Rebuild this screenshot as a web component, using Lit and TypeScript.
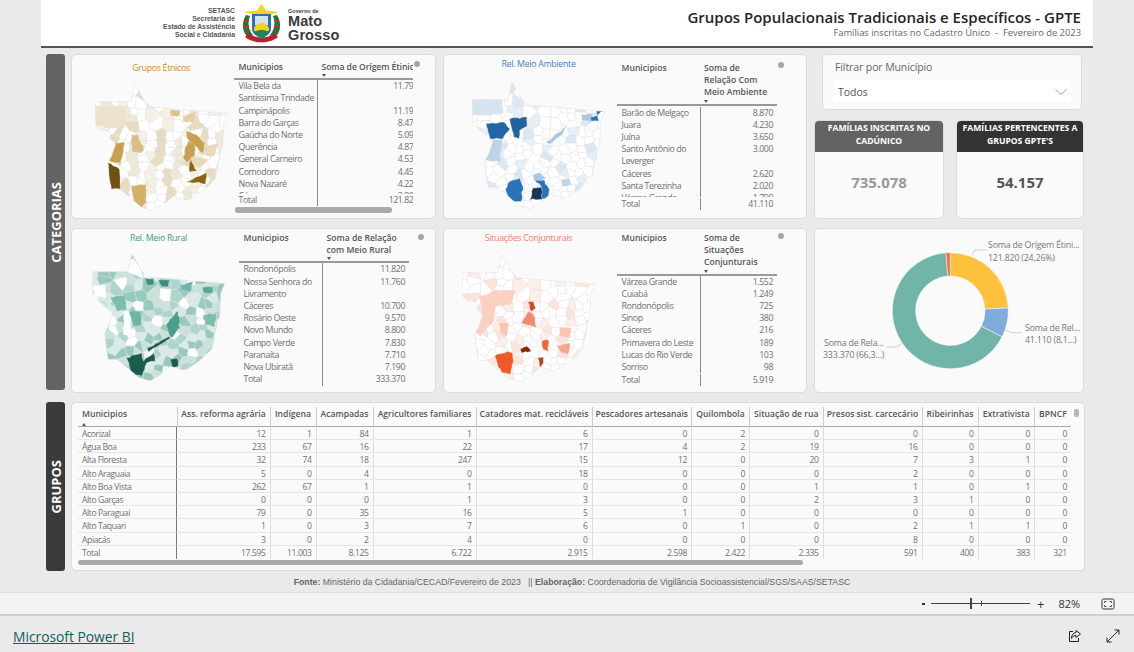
import { LitElement, css, html, svg } from 'lit'
import { customElement } from 'lit/decorators.js'

// map of the state: outline and municipal mesh are in a 400x385 box
const OUTLINE = [
  [0, 53], [107, 53], [115, 20], [120, 0], [135, 25], [145, 45], [165, 68], [245, 75], [400, 88], [388, 118],
  [385, 190], [378, 200], [372, 240], [362, 285], [340, 308], [320, 325], [290, 345], [275, 350], [235, 338],
  [205, 365], [175, 382], [140, 372], [105, 342], [75, 317], [48, 317], [42, 280], [38, 237], [50, 215],
  [62, 180], [30, 150], [0, 122],
]

let seed = 12345
const rand = () => {
  seed = (seed * 1103515245 + 12345) % 2147483648
  return seed / 2147483648
}

function buildSeeds() {
  const seeds: number[][] = []
  for (let y = 8; y < 385; y += 24) {
    for (let x = 6; x < 400; x += 27) {
      // north of the state has bigger municipalities
      if (y < 130 && rand() < 0.35) continue
      seeds.push([x + rand() * 20 - 10, y + rand() * 18 - 9])
    }
  }
  return seeds
}

function clipCell(poly: number[][], a: number[], b: number[]) {
  const mx = (a[0] + b[0]) / 2
  const my = (a[1] + b[1]) / 2
  const nx = b[0] - a[0]
  const ny = b[1] - a[1]
  const side = (p: number[]) => (p[0] - mx) * nx + (p[1] - my) * ny
  const out: number[][] = []
  poly.forEach((p, i) => {
    const q = poly[(i + 1) % poly.length]
    const sp = side(p)
    const sq = side(q)
    if (sp <= 0) out.push(p)
    if (sp < 0 !== sq < 0) {
      const t = sp / (sp - sq)
      out.push([p[0] + (q[0] - p[0]) * t, p[1] + (q[1] - p[1]) * t])
    }
  })
  return out
}

const CELLS = buildSeeds().map((s, i, all) => {
  let poly = [[-5, -5], [405, -5], [405, 390], [-5, 390]]
  all.forEach((o, j) => {
    if (j !== i) poly = clipCell(poly, s, o)
  })
  return poly.map((p) => p[0].toFixed(1) + ',' + p[1].toFixed(1)).join(' ')
})

// hand traced shapes get a wobbly edge so they read as municipal borders
function roughen(pts: number[]) {
  const out: number[] = []
  for (let i = 0; i < pts.length; i += 2) {
    const x = pts[i]
    const y = pts[i + 1]
    const nx = pts[(i + 2) % pts.length]
    const ny = pts[(i + 3) % pts.length]
    out.push(x, y)
    const len = Math.hypot(nx - x, ny - y)
    const steps = Math.floor(len / 9)
    for (let s = 1; s < steps; s++) {
      const t = s / steps
      out.push(x + (nx - x) * t + rand() * 5 - 2.5, y + (ny - y) * t + rand() * 5 - 2.5)
    }
  }
  return out.map((v) => v.toFixed(1)).join(' ')
}

interface Blob {
  color: string
  pts: number[]
}

interface MapDef {
  id: string
  ox: number
  oy: number
  rate: number
  tints: string[]
  blobs: Blob[]
}

const MAPS: Record<string, MapDef> = {
  etnicos: {
    id: 'm1', ox: 165, oy: 253, rate: 45, tints: ['#f1e9d8', '#e8dcc0', '#f6f1e6'],
    blobs: [
      { color: '#ece2cb', pts: [165, 318, 255, 320, 258, 380, 210, 385, 165, 375] },
      { color: '#e3cfa3', pts: [430, 350, 470, 335, 460, 368, 430, 365] },
      { color: '#dcc38b', pts: [392, 330, 422, 332, 420, 348, 392, 347] },
      { color: '#e8dab8', pts: [400, 480, 430, 488, 465, 470, 505, 480, 480, 505, 440, 500] },
      { color: '#e8dab8', pts: [495, 440, 535, 432, 525, 470, 500, 470] },
      { color: '#c9a050', pts: [200, 480, 225, 430, 255, 428, 240, 490, 225, 490] },
      { color: '#c9a050', pts: [430, 475, 445, 425, 465, 425, 465, 470, 440, 488] },
      { color: '#c9a050', pts: [440, 395, 470, 405, 495, 430, 490, 462, 465, 438, 445, 420] },
      { color: '#d3b06a', pts: [275, 560, 320, 555, 318, 610, 300, 630, 280, 610] },
      { color: '#d9bf85', pts: [275, 405, 295, 405, 312, 450, 305, 460, 275, 455] },
      { color: '#6f5210', pts: [203, 490, 238, 510, 240, 570, 213, 570, 205, 530] },
      { color: '#8a6510', pts: [455, 480, 472, 515, 450, 518, 450, 490] },
      { color: '#8a6510', pts: [460, 540, 500, 520, 498, 555, 470, 550, 440, 548] },
    ],
  },
  ambiente: {
    id: 'm2', ox: 97, oy: 245, rate: 20, tints: ['#e6eef6', '#dbe7f3'],
    blobs: [
      { color: '#d6e3f1', pts: [97, 295, 185, 295, 190, 340, 130, 345, 97, 345] },
      { color: '#bcd4ea', pts: [127, 465, 155, 420, 190, 418, 180, 485, 140, 480] },
      { color: '#a8c8e4', pts: [425, 342, 460, 342, 455, 365, 428, 360] },
      { color: '#a8c8e4', pts: [320, 425, 385, 375, 365, 405, 330, 432] },
      { color: '#a8c8e4', pts: [280, 525, 300, 518, 320, 535, 305, 545, 285, 540] },
      { color: '#bcd4ea', pts: [365, 540, 390, 535, 395, 555, 370, 560] },
      { color: '#2066a8', pts: [138, 370, 190, 365, 210, 385, 190, 415, 150, 415] },
      { color: '#20639e', pts: [210, 355, 262, 350, 262, 378, 240, 390, 238, 415, 222, 410, 215, 380] },
      { color: '#2a73b8', pts: [210, 545, 240, 535, 250, 560, 245, 605, 215, 605, 197, 570] },
      { color: '#2a73b8', pts: [285, 540, 315, 540, 330, 570, 330, 595, 308, 598, 305, 560] },
      { color: '#2a73b8', pts: [455, 350, 475, 345, 490, 332, 472, 332, 480, 362, 456, 362] },
      { color: '#14375c', pts: [270, 600, 280, 565, 305, 562, 308, 598] },
    ],
  },
  rural: {
    id: 'm3', ox: 155, oy: 97, rate: 88, tints: ['#c9e2dc', '#aed5cc', '#d8ebe7', '#98c9be'],
    blobs: [
      { color: '#ffffff', pts: [155, 190, 195, 190, 195, 228, 165, 225] },
      { color: '#ffffff', pts: [265, 100, 295, 130, 310, 170, 285, 160, 262, 152] },
      { color: '#ffffff', pts: [250, 270, 270, 268, 275, 340, 248, 340] },
      { color: '#7dbcae', pts: [210, 225, 255, 222, 260, 265, 230, 270] },
      { color: '#6fb5a8', pts: [265, 270, 300, 270, 305, 310, 280, 315] },
      { color: '#6fb5a8', pts: [420, 190, 460, 180, 450, 212, 425, 205] },
      { color: '#4a9e8e', pts: [378, 310, 415, 268, 420, 320, 395, 350] },
      { color: '#3f8f80', pts: [315, 170, 340, 170, 340, 190, 320, 190] },
      { color: '#3f8f80', pts: [355, 175, 390, 175, 385, 195, 365, 195] },
      { color: '#5aa798', pts: [488, 197, 520, 197, 515, 215, 490, 212] },
      { color: '#7dbcae', pts: [490, 280, 530, 275, 525, 315, 495, 310] },
      { color: '#1c5c4f', pts: [320, 380, 390, 345, 388, 353, 325, 392] },
      { color: '#1c5c4f', pts: [258, 410, 305, 395, 310, 420, 340, 395, 345, 420, 320, 425, 305, 465, 270, 460, 265, 425] },
      { color: '#1c5c4f', pts: [390, 415, 412, 412, 415, 435, 395, 440] },
    ],
  },
  conjunturais: {
    id: 'm4', ox: 70, oy: 100, rate: 30, tints: ['#fdeee8', '#fde3da'],
    blobs: [
      { color: '#fbd0c0', pts: [120, 225, 175, 205, 230, 205, 215, 250, 170, 255, 165, 300, 125, 345, 100, 320, 130, 270] },
      { color: '#fbc4b0', pts: [180, 305, 210, 305, 205, 345, 185, 335] },
      { color: '#fbc4b0', pts: [365, 320, 400, 320, 395, 350, 365, 345] },
      { color: '#f7a78e', pts: [355, 375, 395, 365, 390, 400, 370, 395] },
      { color: '#f28c70', pts: [250, 305, 270, 270, 285, 280, 295, 320, 265, 310] },
      { color: '#d8481c', pts: [268, 240, 285, 240, 292, 260, 278, 270] },
      { color: '#f05a28', pts: [168, 405, 205, 390, 222, 395, 225, 420, 215, 460, 190, 455, 175, 425] },
      { color: '#f0683a', pts: [310, 360, 330, 355, 330, 390, 315, 385] },
      { color: '#7f2704', pts: [245, 385, 265, 375, 278, 390, 250, 395] },
      { color: '#b8401a', pts: [298, 410, 315, 408, 315, 425, 305, 440] },
    ],
  },
}

function stateMap(def: MapDef) {
  const outline = OUTLINE.map((p) => p.join(',')).join(' ')
  return svg`<svg class="map" viewBox="-1 -1 402 387">
    <defs><clipPath id=${def.id}><polygon points=${outline}></polygon></clipPath></defs>
    <g clip-path=${`url(#${def.id})`}>
      <polygon points=${outline} fill="#ffffff"></polygon>
      ${CELLS.map((pts, i) => {
        const h = (i * 7919 + def.id.charCodeAt(1) * 131) % 101
        const fill = h < def.rate ? def.tints[h % def.tints.length] : '#ffffff'
        return svg`<polygon points=${pts} fill=${fill} stroke="#dedede" stroke-width="1.3"></polygon>`
      })}
      <g transform=${`translate(${-def.ox} ${-def.oy})`}>
        ${def.blobs.map((b) => svg`<polygon points=${roughen(b.pts)} fill=${b.color} stroke="#e6e6e6" stroke-width="1"></polygon>`)}
      </g>
    </g>
    <polygon points=${outline} fill="none" stroke="#dddddd" stroke-width="1.4"></polygon>
  </svg>`
}

type Row = [string, string]

const CARD_ETNICOS: Row[] = [
  ['Vila Bela da Santíssima Trindade', '11.795'], ['Campinápolis', '11.190'], ['Barra do Garças', '8.473'],
  ['Gaúcha do Norte', '5.090'], ['Querência', '4.873'], ['General Carneiro', '4.533'], ['Comodoro', '4.453'],
  ['Nova Nazaré', '4.223'], ['Cáceres', '3.900'],
]
const CARD_AMBIENTE: Row[] = [
  ['Barão de Melgaço', '8.870'], ['Juara', '4.230'], ['Juína', '3.650'], ['Santo Antônio do Leverger', '3.000'],
  ['Cáceres', '2.620'], ['Santa Terezinha', '2.020'], ['Várzea Grande', '1.790'],
]
const CARD_RURAL: Row[] = [
  ['Rondonópolis', '11.820'], ['Nossa Senhora do Livramento', '11.760'], ['Cáceres', '10.700'],
  ['Rosário Oeste', '9.570'], ['Novo Mundo', '8.800'], ['Campo Verde', '7.830'], ['Paranaíta', '7.710'],
  ['Nova Ubiratã', '7.190'],
]
const CARD_CONJ: Row[] = [
  ['Várzea Grande', '1.552'], ['Cuiabá', '1.249'], ['Rondonópolis', '725'], ['Sinop', '380'], ['Cáceres', '216'],
  ['Primavera do Leste', '189'], ['Lucas do Rio Verde', '103'], ['Sorriso', '98'],
]

const GRID_HEAD = [
  'Municipios', 'Ass. reforma agrária', 'Indígena', 'Acampadas', 'Agricultores familiares', 'Catadores mat. recicláveis',
  'Pescadores artesanais', 'Quilombola', 'Situação de rua', 'Presos sist. carcecário', 'Ribeirinhas', 'Extrativista', 'BPNCF',
]
const GRID_ROWS = [
  ['Acorizal', '12', '1', '84', '1', '6', '0', '2', '0', '0', '0', '0', '0'],
  ['Água Boa', '233', '67', '16', '22', '17', '4', '2', '19', '16', '0', '0', '0'],
  ['Alta Floresta', '32', '74', '18', '247', '15', '12', '0', '20', '7', '3', '1', '0'],
  ['Alto Araguaia', '5', '0', '4', '0', '18', '0', '0', '0', '2', '0', '0', '0'],
  ['Alto Boa Vista', '262', '67', '1', '1', '0', '0', '0', '1', '1', '0', '1', '0'],
  ['Alto Garças', '0', '0', '0', '1', '3', '0', '0', '2', '3', '1', '0', '0'],
  ['Alto Paraguai', '79', '0', '35', '16', '5', '1', '0', '0', '0', '0', '0', '0'],
  ['Alto Taquari', '1', '0', '3', '7', '6', '0', '1', '0', '2', '1', '1', '0'],
  ['Apiacás', '3', '0', '2', '4', '0', '0', '0', '0', '8', '0', '0', '0'],
]
const GRID_TOTAL = ['Total', '17.595', '11.003', '8.125', '6.722', '2.915', '2.598', '2.422', '2.335', '591', '400', '383', '321']

const DONUT = [
  { share: 24.26, color: '#fdc13e' },
  { share: 8.19, color: '#7fadd9' },
  { share: 66.37, color: '#70b5a8' },
  { share: 1.18, color: '#ef6f55' },
]

function donutSlices(cx: number, cy: number, ro: number, ri: number) {
  let start = 0
  return DONUT.map((d) => {
    const end = start + (d.share / 100) * Math.PI * 2
    const p = (r: number, a: number) => `${(cx + r * Math.sin(a)).toFixed(2)} ${(cy - r * Math.cos(a)).toFixed(2)}`
    const big = end - start > Math.PI ? 1 : 0
    const path = `M${p(ro, start)}A${ro} ${ro} 0 ${big} 1 ${p(ro, end)}L${p(ri, end)}A${ri} ${ri} 0 ${big} 0 ${p(ri, start)}Z`
    start = end
    return svg`<path d=${path} fill=${d.color} stroke="#fafafa" stroke-width="0.5"></path>`
  })
}

@customElement('app-root')
export class AppRoot extends LitElement {
  private _miniTable(cls: string, title: string, rows: Row[], total: string) {
    return html`
      <div class="mini ${cls}">
        <div class="inner">
          <div class="head">
            <div class="h-cell">Municipios</div>
            <div class="h-cell">${title}<span class="sort"></span></div>
          </div>
          <div class="body">
            ${rows.map((r) => html`<div class="row"><div class="name">${r[0]}</div><div class="val">${r[1]}</div></div>`)}
          </div>
          <div class="row total"><div class="name">Total</div><div class="val">${total}</div></div>
        </div>
      </div>
    `
  }

  private _mapCard(cls: string, title: string, map: MapDef, table: unknown) {
    return html`
      <section class="card map-card ${cls}">
        <div class="map-col">
          <div class="map-title">${title}</div>
          ${stateMap(map)}
        </div>
        ${table}
        <span class="dot"></span>
      </section>
    `
  }

  private _coatOfArms() {
    return svg`<svg class="arms" viewBox="0 0 41 40">
      <path d="M5 12C0 20 1 30 8 35L12 32C8 28 6 20 9 13Z" fill="#1c7a3a"></path>
      <path d="M36 12C41 20 40 30 33 35L29 32C33 28 35 20 32 13Z" fill="#1c7a3a"></path>
      <path d="M3 18L8 17M2 24L8 23M4 30L9 27M38 18L33 17M39 24L33 23M37 30L32 27" stroke="#c9302c" stroke-width="1.4"></path>
      <path d="M4 34C12 41 29 41 37 34L33 30C27 36 14 36 8 30Z" fill="#b9222a"></path>
      <path d="M3 9L16 7.500L20.500 1L25 7.500L38 9L28 12H13Z" fill="#f4d21f"></path>
      <path d="M11 11H30V26C30 31 25 33 20.500 36C16 33 11 31 11 26Z" fill="#2f6fb5"></path>
      <path d="M14 13H27V22H14Z" fill="#cfe8f4"></path>
      <path d="M13 25C16 18 25 18 28 25V27C25 31 16 31 13 27Z" fill="#f4d21f"></path>
      <path d="M14 29C18 26 23 26 27 29C25 32 22 34 20.500 35C19 34 16 32 14 29Z" fill="#1c8a45"></path>
    </svg>`
  }

  render() {
    return html`
      <header class="top">
        <div class="logo">
          <div class="org">SETASC<br />Secretaria de<br />Estado de Assistência<br />Social e Cidadania</div>
          ${this._coatOfArms()}
          <div class="gov"><small>Governo de</small><b>Mato</b><b>Grosso</b></div>
        </div>
        <div class="heading">
          <h1>Grupos Populacionais Tradicionais e Específicos - GPTE</h1>
          <p>Famílias inscritas no Cadastro Único &nbsp;-&nbsp; Fevereiro de 2023</p>
        </div>
      </header>

      <main class="content">
        <div class="band">
          <div class="side"><span>CATEGORIAS</span></div>
          <div class="cats">
            ${this._mapCard('c1', 'Grupos Étnicos', MAPS.etnicos, this._miniTable('t1', 'Soma de Orígem Étinica', CARD_ETNICOS, '121.820'))}
            ${this._mapCard('c2', 'Rel. Meio Ambiente', MAPS.ambiente, this._miniTable('t2', 'Soma de Relação Com Meio Ambiente', CARD_AMBIENTE, '41.110'))}
            <div class="right-top">
              <section class="card filter">
                <div class="filter-label">Filtrar por Município</div>
                <div class="select">
                  <span>Todos</span>
                  <svg class="chev" viewBox="0 0 12 6"><path d="M.5 .5L6 5.500L11.500 .5" fill="none" stroke="#8a8a8a" stroke-width="0.8"></path></svg>
                </div>
              </section>
              <div class="kpis">
                <section class="card kpi k1">
                  <div class="kpi-head">FAMÍLIAS INSCRITAS NO CADÚNICO</div>
                  <div class="kpi-val">735.078</div>
                </section>
                <section class="card kpi k2">
                  <div class="kpi-head">FAMÍLIAS PERTENCENTES A GRUPOS GPTE'S</div>
                  <div class="kpi-val">54.157</div>
                </section>
              </div>
            </div>
            ${this._mapCard('c3', 'Rel. Meio Rural', MAPS.rural, this._miniTable('t3', 'Soma de Relação com Meio Rural', CARD_RURAL, '333.370'))}
            ${this._mapCard('c4', 'Situações Conjunturais', MAPS.conjunturais, this._miniTable('t4', 'Soma de Situações Conjunturais', CARD_CONJ, '5.919'))}
            <section class="card donut">
              <svg viewBox="0 0 270 164" width="270" height="164">
                ${donutSlices(136.3, 82.7, 58, 34.7)}
                <path d="M157.700 27.300L161 22H172.700M191 102.300L197.700 104.700H207.700M72.700 119H82.700L87.700 115.700" fill="none" stroke="#c4c4c4" stroke-width="0.8"></path>
                <text x="174" y="20">Soma de Orígem Étini...</text>
                <text x="174" y="33">121.820 (24,26%)</text>
                <text x="211" y="102.500">Soma de Rel...</text>
                <text x="211" y="115">41.110 (8,1...)</text>
                <text x="10" y="117.500">Soma de Rela...</text>
                <text x="9" y="129.500">333.370 (66,3...)</text>
              </svg>
            </section>
          </div>
        </div>

        <div class="band groups">
          <div class="side dark"><span>GRUPOS</span></div>
          <section class="card sheet">
            <div class="grid">
              ${GRID_HEAD.map((h, i) => html`<div class="gh ${i === 0 ? 'first' : ''}">${h}${i === 0 ? html`<span class="sort up"></span>` : ''}</div>`)}
              ${GRID_ROWS.map((r) => r.map((c, i) => html`<div class="gc ${i === 0 ? 'first' : ''}">${c}</div>`))}
              ${GRID_TOTAL.map((c, i) => html`<div class="gc tot ${i === 0 ? 'first' : ''}">${c}</div>`)}
            </div>
            <div class="hbar"><span></span></div>
            <span class="vbar"></span>
          </section>
        </div>

        <footer class="source">
          <b>Fonte:</b> Ministério da Cidadania/CECAD/Fevereiro de 2023 &nbsp; || <b>Elaboração:</b> Coordenadoria de Vigilância Socioassistencial/SGS/SAAS/SETASC
        </footer>
      </main>

      <div class="zoombar">
        <span class="minus"></span>
        <div class="slider"><span class="thumb"></span><span class="tick"></span></div>
        <span class="plus">+</span>
        <span class="pct">82%</span>
        <svg class="fit" viewBox="0 0 14 12"><rect x="1" y="1" width="12" height="10" rx="1.500" fill="none" stroke="#333" stroke-width="1"></rect><path d="M3.500 5V3.500H5.500M8.500 3.500H10.500V5M10.500 7V8.500H8.500M5.500 8.500H3.500V7" fill="none" stroke="#333" stroke-width="0.8"></path></svg>
      </div>
      <div class="bottombar">
        <a class="brand" href="#">Microsoft Power BI</a>
        <div class="actions">
          <svg viewBox="0 0 14 14"><path d="M8 1.500L12.500 5L8 8.500V6.500C5.500 6.500 4.500 7.500 3.500 9.500C3.500 6 5 3.800 8 3.500Z" fill="none" stroke="#222" stroke-width="1"></path><path d="M5 2.500H1.500V12.500H10.500V9" fill="none" stroke="#222" stroke-width="1"></path></svg>
          <svg viewBox="0 0 14 14"><path d="M8.500 1H13V5.500M13 1L1 13M1 8.500V13H5.500" fill="none" stroke="#222" stroke-width="1"></path></svg>
        </div>
      </div>
    `
  }

  static styles = css`
    :host {
      display: flex;
      flex-direction: column;
      width: 1134px;
      height: 652px;
      background: #eaeaea;
      font-family: "Open Sans", "Noto Sans", sans-serif;
      color: #666;
      overflow: hidden;
    }

    .top {
      box-sizing: border-box;
      width: 1052px;
      height: 48px;
      margin-left: 41px;
      background: #fff;
      border-bottom: 2px solid #555;
      display: flex;
      justify-content: space-between;
      padding: 0 12px 0 121px;
    }
    .logo {
      display: flex;
      align-items: center;
      gap: 6px;
    }
    .org {
      width: 73px;
      font-size: 6.8px;
      line-height: 8.100px;
      font-weight: 700;
      text-align: right;
      color: #555;
      font-family: "Liberation Sans", sans-serif;
      white-space: nowrap;
    }
    .arms {
      width: 41px;
      height: 40px;
    }
    .gov {
      display: flex;
      flex-direction: column;
      font-family: "Liberation Sans", sans-serif;
      color: #3c3c3c;
      padding-top: 4px;
    }
    .gov small {
      font-size: 5.500px;
      font-weight: 700;
      line-height: 6px;
    }
    .gov b {
      font-size: 14.500px;
      line-height: 14px;
      letter-spacing: 0.1px;
    }
    .heading {
      text-align: right;
      padding-top: 7px;
    }
    .heading h1 {
      margin: 0;
      font-size: 15px;
      line-height: 20px;
      font-weight: 600;
      color: #252423;
      white-space: nowrap;
    }
    .heading p {
      margin: 0;
      font-size: 9.350px;
      line-height: 12px;
      color: #666;
      white-space: nowrap;
    }

    .content {
      flex: 1;
      display: flex;
      flex-direction: column;
      padding: 6px 0 0 46px;
    }
    .band {
      display: flex;
      align-items: flex-start;
      gap: 6px;
    }
    .band.groups {
      margin-top: 9px;
    }
    .side {
      width: 19px;
      height: 336px;
      background: #636363;
      border-radius: 3px;
      display: flex;
      align-items: center;
      justify-content: center;
      flex: none;
    }
    .side.dark {
      height: 169px;
      background: #3b3b3b;
    }
    .side span {
      writing-mode: vertical-rl;
      transform: rotate(180deg);
      color: #fff;
      font-size: 13px;
      font-weight: 700;
      white-space: nowrap;
    }

    .cats {
      display: grid;
      grid-template-columns: 365px 364px 270px;
      grid-template-rows: 165px 165px;
      column-gap: 7px;
      row-gap: 9px;
    }
    .card {
      box-sizing: border-box;
      background: #fafafa;
      border: 1px solid #dcdcdc;
      border-radius: 5px;
      position: relative;
    }

    .map-card {
      display: flex;
    }
    .map-col {
      flex: none;
      box-sizing: border-box;
      display: flex;
      flex-direction: column;
      align-items: center;
    }
    .map-title {
      font-size: 8.800px;
      line-height: 13px;
      letter-spacing: -0.3px;
      white-space: nowrap;
    }
    .map {
      width: 133px;
      height: 128px;
      flex: none;
    }
    .c1 .map-col { width: 162px; padding: 7px 0 0 16px; }
    .c1 .map-title { color: #c58b2e; }
    .c1 .map { margin-top: 9px; }
    .c2 .map-col { width: 173px; padding: 3px 0 0 16px; }
    .c2 .map-title { color: #4a7fbc; }
    .c2 .map { margin-top: 11px; }
    .c3 .map-col { width: 167px; padding: 3px 0 0 6px; }
    .c3 .map-title { color: #3f9a8c; }
    .c3 .map { margin-top: 9px; }
    .c4 .map-col { width: 173px; padding: 3px 4px 0 0; }
    .c4 .map-title { color: #f0806a; }
    .c4 .map { margin-top: 10px; }

    .dot {
      position: absolute;
      width: 6px;
      height: 6px;
      border-radius: 50%;
      background: #a6a6a6;
    }
    .c1 .dot { left: 342px; top: 6px; }
    .c2 .dot { left: 334px; top: 7px; }
    .c3 .dot { left: 346px; top: 5px; }
    .c4 .dot { left: 334px; top: 4px; }

    .mini {
      flex: none;
      overflow: hidden;
      font-size: 8.800px;
      line-height: 12.200px;
    }
    .head,
    .row {
      display: grid;
    }
    .head {
      border-bottom: 2px solid #999;
      padding-bottom: 5px;
      font-size: 8.600px;
    }
    .h-cell {
      padding-left: 4.500px;
      font-weight: 600;
      color: #555;
      position: relative;
    }
    .sort {
      position: absolute;
      left: 4.500px;
      bottom: -4px;
      border: 2.500px solid transparent;
      border-top: 3px solid #555;
      border-bottom: 0;
    }
    .body {
      overflow: hidden;
    }
    .name {
      padding-left: 4.500px;
      letter-spacing: -0.4px;
      color: #707070;
    }
    .val {
      text-align: right;
      padding-right: 4px;
      border-left: 1px solid #888;
      letter-spacing: -0.45px;
      color: #707070;
    }
    .total .val {
      height: 12.200px;
    }

    .t1 { width: 179px; margin-top: 6px; }
    .t1 .inner { width: 188px; }
    .t1 .head, .t1 .row { grid-template-columns: 83px 105px; }
    .t1 .h-cell { white-space: nowrap; letter-spacing: -0.06px; }
    .t1 .body { height: 114px; }

    .t2 { width: 160px; margin-top: 7px; }
    .t2 .head, .t2 .row { grid-template-columns: 82.500px 77.500px; }
    .t2 .h-cell + .h-cell { padding-right: 8px; }
    .t2 .body { height: 90.500px; padding-top: 1px; }
    .t2 .total { margin-top: 1px; }

    .t3 { width: 170px; margin-top: 3px; }
    .t3 .head, .t3 .row { grid-template-columns: 83px 87px; }
    .t3 .h-cell + .h-cell { padding-right: 8px; }
    .t3 .body { height: 110px; }

    .t4 { width: 160px; margin-top: 3px; }
    .t4 .head, .t4 .row { grid-template-columns: 82.500px 77.500px; }
    .t4 .h-cell + .h-cell { padding-right: 12px; }
    .t4 .body { height: 98px; }

    .c1::after {
      content: "";
      position: absolute;
      left: 163px;
      top: 152px;
      width: 157px;
      height: 6px;
      border-radius: 3px;
      background: #a9a9a9;
    }

    .right-top {
      display: flex;
      flex-direction: column;
      gap: 10px;
    }
    .filter {
      height: 56px;
      margin: 0 2px 0 8px;
      padding: 5px 10px;
    }
    .filter-label {
      font-size: 10.500px;
      line-height: 15px;
      letter-spacing: -0.1px;
      padding-left: 2px;
      color: #666;
    }
    .select {
      height: 22px;
      margin-top: 5px;
      background: #fff;
      display: flex;
      align-items: center;
      justify-content: space-between;
      padding: 2px 4px 0 5px;
      box-sizing: border-box;
      font-size: 10.500px;
      color: #555;
    }
    .chev {
      width: 12px;
      height: 6px;
    }
    .kpis {
      display: flex;
      gap: 12px;
    }
    .kpi {
      height: 99px;
      overflow: hidden;
      display: flex;
      flex-direction: column;
      align-items: center;
    }
    .k1 { width: 130px; }
    .k2 { width: 128px; }
    .kpi-head {
      box-sizing: border-box;
      width: 100%;
      height: 31px;
      background: #636363;
      color: #fff;
      font-size: 8.600px;
      line-height: 12.500px;
      font-weight: 700;
      text-align: center;
      padding: 1px 4px 0;
    }
    .k2 .kpi-head {
      background: #333;
      padding: 1px 2px 0;
    }
    .kpi-val {
      font-size: 15px;
      font-weight: 700;
      margin-top: 20px;
      color: #999;
    }
    .k2 .kpi-val {
      color: #555;
    }

    .donut svg {
      display: block;
      margin: -1px;
    }
    .donut text {
      font-size: 8.800px;
      letter-spacing: -0.18px;
      fill: #777;
    }

    .sheet {
      width: 1014px;
      height: 169px;
      padding: 4px 0 0 6px;
    }
    .grid {
      display: grid;
      grid-template-columns: 98.500px 93px 46px 57px 103px 116px 99.500px 58px 73.500px 99px 56px 56.400px 37px;
      grid-template-rows: 20px repeat(10, 13.200px);
      font-size: 8.600px;
      line-height: 13px;
      width: max-content;
    }
    .gh {
      font-weight: 600;
      color: #555;
      text-align: center;
      border-left: 1px solid #ccc;
      border-bottom: 1px solid #aaa;
      box-sizing: border-box;
      white-space: nowrap;
      line-height: 15px;
      position: relative;
    }
    .gh.first {
      text-align: left;
      padding-left: 4px;
      border-left: 0;
    }
    .sort.up {
      left: 4px;
      bottom: 0;
      border-top: 0;
      border-bottom: 3px solid #555;
    }
    .gc {
      box-sizing: border-box;
      text-align: right;
      padding-right: 4px;
      border-left: 1px solid #ddd;
      border-bottom: 1px solid #e6e6e6;
      white-space: nowrap;
      letter-spacing: -0.4px;
      line-height: 15px;
      color: #707070;
    }
    .gc.first {
      text-align: left;
      padding: 0 0 0 4px;
      border-left: 0;
      border-right: 1px solid #777;
    }
    .gc.first + .gc {
      border-left: 0;
    }
    .gc.tot {
      border-bottom: 0;
    }
    .hbar {
      margin-top: 1px;
      height: 5px;
    }
    .hbar span {
      display: block;
      width: 725px;
      height: 100%;
      border-radius: 3px;
      background: #a9a9a9;
    }
    .vbar {
      position: absolute;
      left: 1002px;
      top: 6px;
      width: 5px;
      height: 8px;
      border-radius: 2px;
      background: #b5b5b5;
    }

    .source {
      text-align: center;
      font-family: "Liberation Sans", sans-serif;
      font-size: 8.750px;
      line-height: 12px;
      margin: 4px 0 0 -46px;
      color: #666;
      padding: 1px 0 0 10px;
    }

    .zoombar {
      box-sizing: border-box;
      height: 24px;
      background: #f3f3f3;
      border-top: 1px solid #dedede;
      border-bottom: 2px solid #cfcfcf;
      display: flex;
      align-items: center;
      padding-left: 922px;
      color: #333;
      font-size: 11px;
      flex: none;
    }
    .minus {
      width: 3px;
      height: 2px;
      background: #333;
    }
    .slider {
      width: 99px;
      height: 1px;
      background: #444;
      margin-left: 6px;
      position: relative;
    }
    .thumb {
      position: absolute;
      left: 39px;
      top: -5px;
      width: 2px;
      height: 11px;
      background: #444;
    }
    .tick {
      position: absolute;
      left: 50px;
      top: -2px;
      width: 1px;
      height: 5px;
      background: #444;
    }
    .plus {
      margin-left: 7px;
      font-size: 13px;
    }
    .pct {
      margin-left: 14px;
      width: 30px;
    }
    .fit {
      width: 14px;
      height: 12px;
      margin-left: 13px;
    }

    .bottombar {
      flex: none;
      box-sizing: border-box;
      height: 36px;
      display: flex;
      align-items: center;
      justify-content: space-between;
      padding: 4px 14px 0 13px;
    }
    .brand {
      color: #0c5f5a;
      font-size: 13.800px;
    }
    .actions {
      display: flex;
      gap: 24px;
    }
    .actions svg {
      width: 14px;
      height: 14px;
    }
  `
}

declare global {
  interface HTMLElementTagNameMap {
    'app-root': AppRoot
  }
}
